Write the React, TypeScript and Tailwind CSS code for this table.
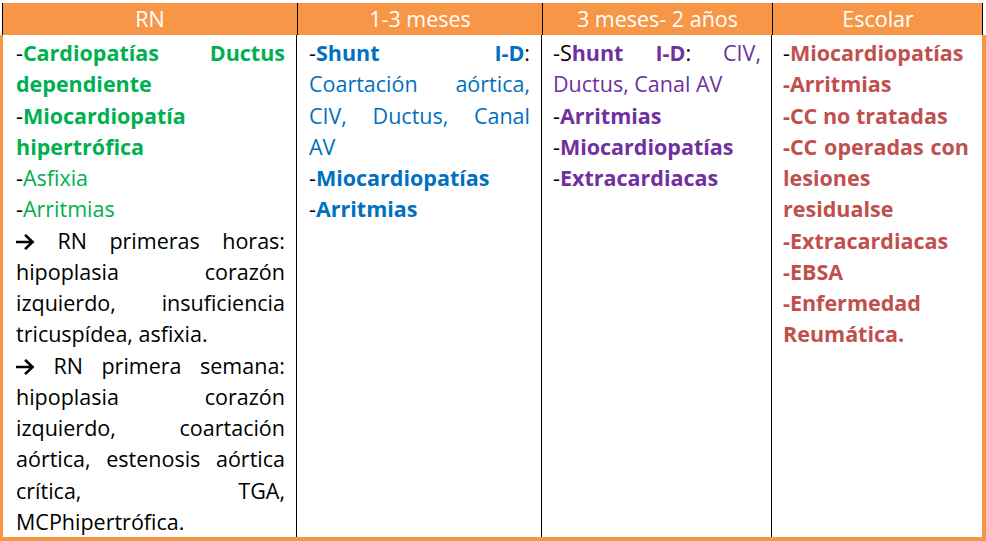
import React from 'react';

const orange = 'bg-[#F79646]';

// one justified line (the last line of a paragraph is left aligned, as in Word)
const J = ({ children }: { children: React.ReactNode }) => (
  <div className="text-justify [text-align-last:justify] whitespace-nowrap">{children}</div>
);
const L = ({ children }: { children: React.ReactNode }) => <div className="whitespace-nowrap">{children}</div>;

const Arrow = () => (
  <svg viewBox="0 0 19 16" className="inline-block w-[19px] h-[16px] align-[-1px]">
    <path d="M1 8h15.5M10 1.8L16.5 8 10 14.2" fill="none" stroke="#000" strokeWidth="2.6" strokeLinecap="square" />
  </svg>
);

const headers = ['RN', '1-3 meses', '3 meses- 2 años', 'Escolar'];

export default function App() {
  return (
    <div className="w-[986px] h-[541px] bg-white pt-[3px] flex flex-col text-[21.5px] font-['Open_Sans','Lato',sans-serif]">
      {/* header row */}
      <div className={`${orange} mx-[2px] mr-[3px] h-[32px] grid grid-cols-[294px_245px_230px_211px] border-l border-r border-black text-white`}>
        {headers.map((h, i) => (
          <div key={h} className={`flex items-center justify-center ${i > 0 ? 'border-l border-black' : ''}`}>
            {h}
          </div>
        ))}
      </div>

      {/* body row */}
      <div className="flex-1 grid grid-cols-[293px_245px_230px_210px] border-l-[3px] border-r-[4px] border-b-[4px] border-[#F79646] leading-[31.25px] text-black">
        <div className="pl-[13px] pr-[11px] pt-[2px]">
          <J>-<b className="text-[#00B050]">Cardiopatías Ductus</b></J>
          <L><b className="text-[#00B050]">dependiente</b></L>
          <L>-<b className="text-[#00B050]">Miocardiopatía</b></L>
          <L><b className="text-[#00B050]">hipertrófica</b></L>
          <L>-<span className="text-[#00B050]">Asfixia</span></L>
          <L>-<span className="text-[#00B050]">Arritmias</span></L>
          <J><Arrow /> RN primeras horas:</J>
          <J>hipoplasia corazón</J>
          <J>izquierdo, insuficiencia</J>
          <L>tricuspídea, asfixia.</L>
          <J><Arrow /> RN primera semana:</J>
          <J>hipoplasia corazón</J>
          <J>izquierdo, coartación</J>
          <J>aórtica, estenosis aórtica</J>
          <J>crítica, TGA,</J>
          <L>MCPhipertrófica.</L>
        </div>

        <div className="border-l border-black pl-[12px] pr-[11px] pt-[2px] text-[#0070C0]">
          <J><span className="text-black">-</span><b>Shunt I-D</b><span className="text-black">:</span></J>
          <J>Coartación aórtica,</J>
          <J>CIV, Ductus, Canal</J>
          <L>AV</L>
          <L><span className="text-black">-</span><b>Miocardiopatías</b></L>
          <L><span className="text-black">-</span><b>Arritmias</b></L>
        </div>

        <div className="border-l border-black pl-[11px] pr-[10px] pt-[2px] text-[#7030A0]">
          <J><span className="text-black">-S</span><b>hunt I-D</b><span className="text-black">:</span> CIV,</J>
          <L>Ductus, Canal AV</L>
          <L><span className="text-black">-</span><b>Arritmias</b></L>
          <L><span className="text-black">-</span><b>Miocardiopatías</b></L>
          <L><span className="text-black">-</span><b>Extracardiacas</b></L>
        </div>

        <div className="border-l border-black pl-[11px] pr-[12px] pt-[2px] font-bold text-[#C0504D]">
          <L><span className="text-black font-normal">-</span>Miocardiopatías</L>
          <L>-Arritmias</L>
          <L>-CC no tratadas</L>
          <J>-CC operadas con</J>
          <L>lesiones</L>
          <L>residualse</L>
          <L>-Extracardiacas</L>
          <L>-EBSA</L>
          <L>-Enfermedad</L>
          <L>Reumática.</L>
        </div>
      </div>
    </div>
  );
}
